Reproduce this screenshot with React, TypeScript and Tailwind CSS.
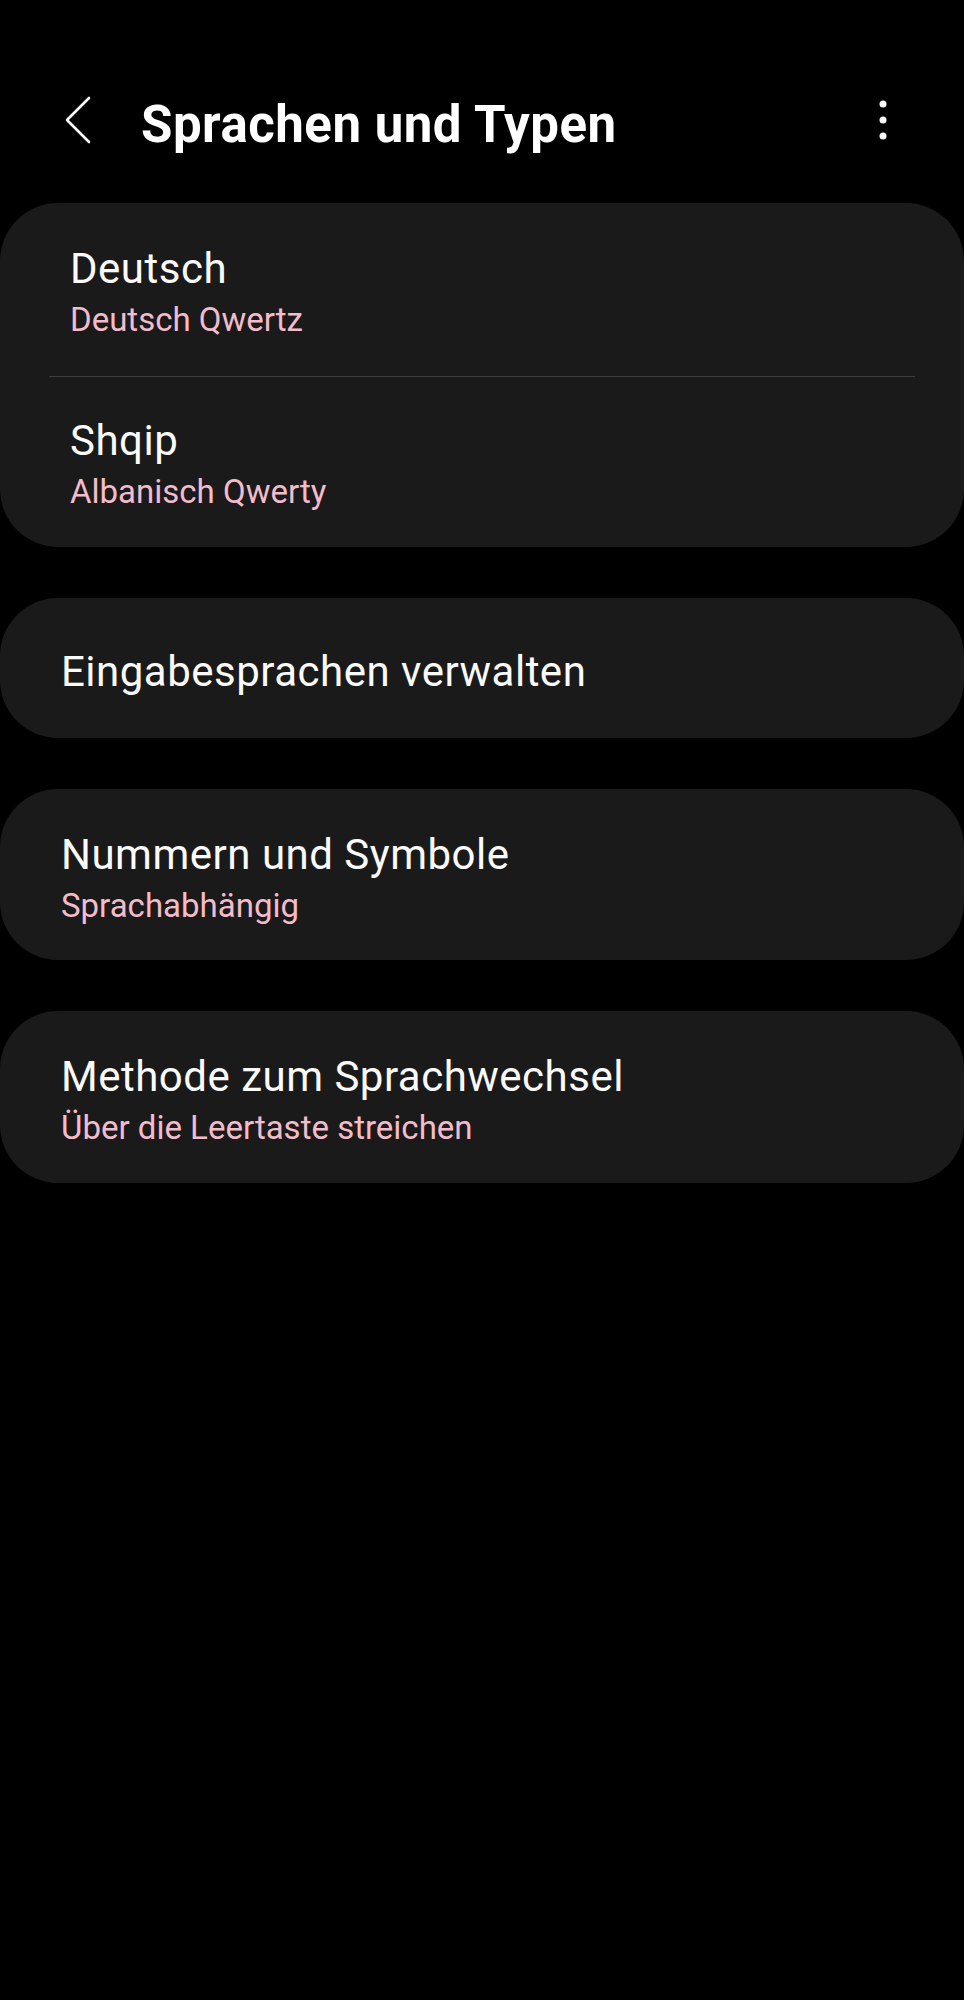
import React from 'react';

type Item = { title: string; sub?: string };

function Row({ item, pl, pt, pb }: { item: Item; pl: string; pt: string; pb: string }) {
  return (
    <div className={`${pl} ${pt} ${pb}`}>
      <div className="text-[42px] leading-[50px] tracking-[0.5px] text-[#fafafa]">{item.title}</div>
      {item.sub && (
        <div className="mt-[6px] text-[33px] leading-[40px] text-[#f3bccb]">{item.sub}</div>
      )}
    </div>
  );
}

export default function App() {
  return (
    <div
      className="min-h-[2000px] w-full bg-black pt-[90px] text-white"
      style={{ fontFamily: 'Roboto, "Noto Sans", sans-serif' }}
    >
      {/* Header */}
      <header className="flex h-[60px] items-center pl-[64px] pr-[77px]">
        <svg width="28" height="48" viewBox="0 0 28 48" fill="none" className="shrink-0">
          <path d="M25 2 L3 24 L25 46" stroke="#fff" strokeWidth="2.6" strokeLinecap="round" strokeLinejoin="round" />
        </svg>
        <h1 className="ml-[49px] pt-[9px] text-[51px] font-bold leading-[60px] tracking-[0.5px] text-white">
          Sprachen und Typen
        </h1>
        <svg width="8" height="42" viewBox="0 0 8 42" className="ml-auto shrink-0">
          <circle cx="4" cy="5" r="3.5" fill="#fff" />
          <circle cx="4" cy="21" r="3.5" fill="#fff" />
          <circle cx="4" cy="37" r="3.5" fill="#fff" />
        </svg>
      </header>

      <div className="mt-[53px] flex flex-col gap-[51px]">
        {/* Keyboards */}
        <section className="rounded-[58px] bg-[#1a1a1a]">
          <Row item={{ title: 'Deutsch', sub: 'Deutsch Qwertz' }} pl="pl-[70px]" pt="pt-[41px]" pb="pb-[36px]" />
          <div className="mx-[49px] h-px bg-[#3c3c3c]" />
          <Row item={{ title: 'Shqip', sub: 'Albanisch Qwerty' }} pl="pl-[70px]" pt="pt-[39px]" pb="pb-[35px]" />
        </section>

        <section className="rounded-[58px] bg-[#1a1a1a]">
          <Row item={{ title: 'Eingabesprachen verwalten' }} pl="pl-[61px]" pt="pt-[49px]" pb="pb-[41px]" />
        </section>

        <section className="rounded-[58px] bg-[#1a1a1a]">
          <Row item={{ title: 'Nummern und Symbole', sub: 'Sprachabhängig' }} pl="pl-[61px]" pt="pt-[41px]" pb="pb-[34px]" />
        </section>

        <section className="rounded-[58px] bg-[#1a1a1a]">
          <Row item={{ title: 'Methode zum Sprachwechsel', sub: 'Über die Leertaste streichen' }} pl="pl-[61px]" pt="pt-[41px]" pb="pb-[35px]" />
        </section>
      </div>
    </div>
  );
}
